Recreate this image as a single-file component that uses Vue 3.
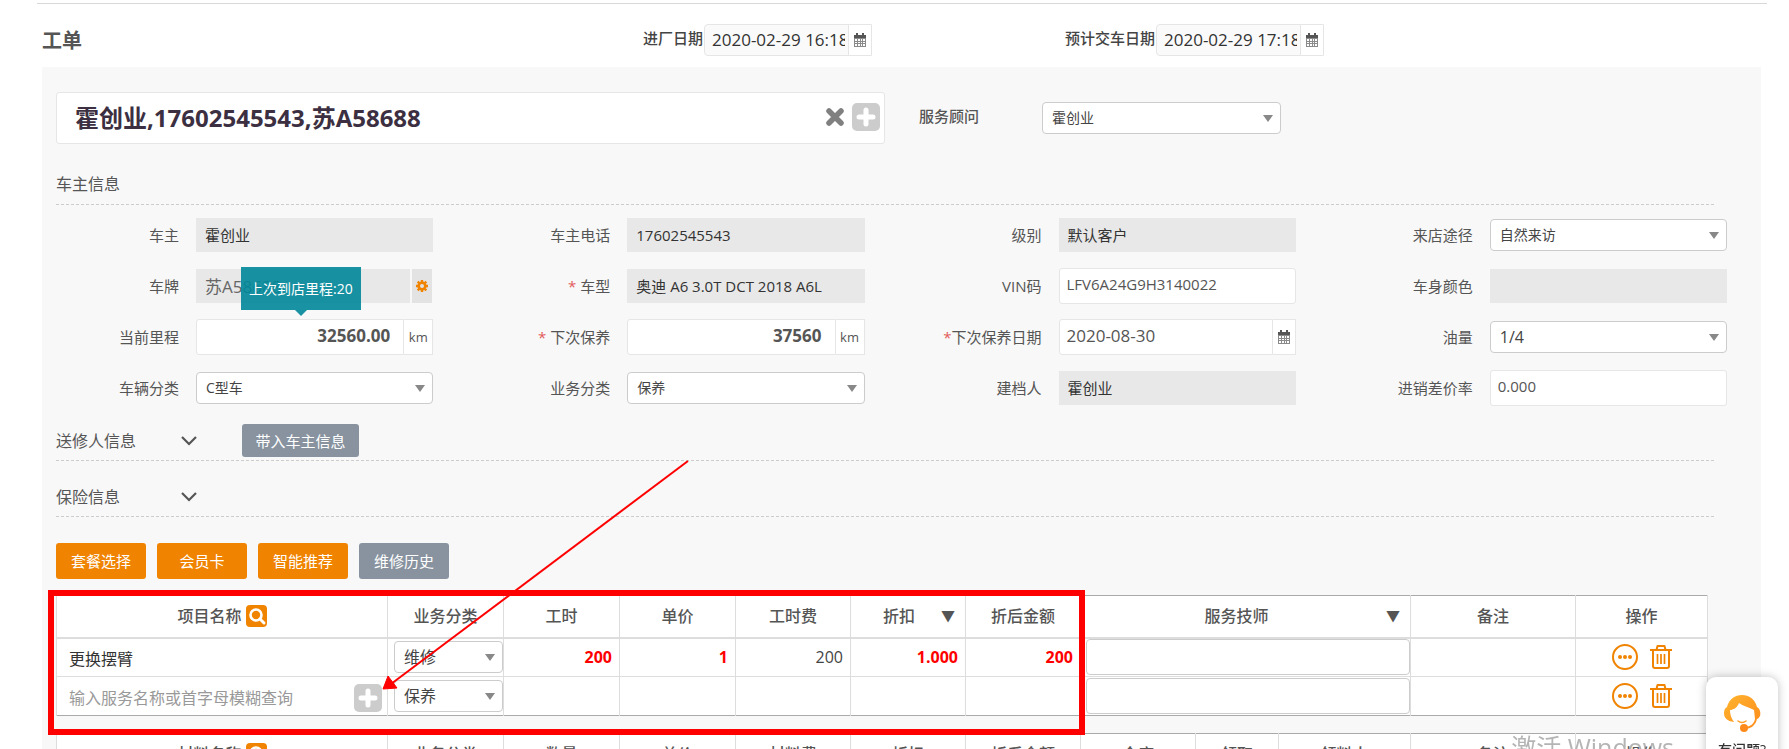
<script setup>
import { ref } from 'vue'

const keyword = ref('霍创业,17602545543,苏A58688')
const inDate = ref('2020-02-29 16:18:00')
const outDate = ref('2020-02-29 17:18:00')

const fields = ref([
  { id: 'owner', label: '车主', type: 'readonly', value: '霍创业' },
  { id: 'phone', label: '车主电话', type: 'readonly', value: '17602545543' },
  { id: 'level', label: '级别', type: 'readonly', value: '默认客户' },
  { id: 'source', label: '来店途径', type: 'select', value: '自然来访' },
  { id: 'plate', label: '车牌', type: 'plate', value: '苏A58688' },
  { id: 'model', label: '车型', star: '* ', type: 'readonly', value: '奥迪 A6 3.0T DCT 2018 A6L' },
  { id: 'vin', label: 'VIN码', type: 'text', value: 'LFV6A24G9H3140022' },
  { id: 'color', label: '车身颜色', type: 'readonly', value: '' },
  { id: 'mileage', label: '当前里程', type: 'km', value: '32560.00', tip: '上次到店里程:20' },
  { id: 'next', label: '下次保养', star: '* ', type: 'km', value: '37560' },
  { id: 'nextDate', label: '下次保养日期', star: '*', type: 'date', value: '2020-08-30' },
  { id: 'fuel', label: '油量', type: 'select', value: '1/4', large: true },
  { id: 'carType', label: '车辆分类', type: 'select', value: 'C型车' },
  { id: 'bizType', label: '业务分类', type: 'select', value: '保养' },
  { id: 'creator', label: '建档人', type: 'readonly', value: '霍创业' },
  { id: 'rate', label: '进销差价率', type: 'text', value: '0.000' }
])

const items = ref([
  { name: '更换摆臂', type: '维修', hours: '200', price: '1', fee: '200', discount: '1.000', total: '200', tech: '' },
  { name: '', type: '保养', hours: '', price: '', fee: '', discount: '', total: '', tech: '' }
])

const actions = [
  { text: '套餐选择', tone: 'orange' },
  { text: '会员卡', tone: 'orange' },
  { text: '智能推荐', tone: 'orange' },
  { text: '维修历史', tone: 'slate' }
]

const materialHeads = ['业务分类', '数量', '单价', '材料费', '折扣', '折后金额', '仓库', '领取', '领料人', '备注', '操作']
</script>

<template>
  <div class="page">
    <svg class="defs" aria-hidden="true">
      <symbol id="i-calendar" viewBox="0 0 12 14">
        <path d="M0 3h12v11H0z" fill="#8a8a8a" />
        <path d="M0 2h12v3H0z" fill="#555" />
        <path d="M2 0h2v4H2zM8 0h2v4H8z" fill="#555" />
        <path d="M1 6h2v2H1zM4 6h2v2H4zM7 6h1v2H7zM9 6h2v2H9zM1 9h2v1H1zM4 9h2v1H4zM7 9h1v1H7zM9 9h2v1H9zM1 11h2v2H1zM4 11h2v2H4zM7 11h1v2H7zM9 11h2v2H9z" fill="#fff" />
      </symbol>
      <symbol id="i-plus" viewBox="0 0 28 28">
        <rect width="28" height="28" rx="5" fill="#ccc" />
        <path d="M14 7v14M7 14h14" stroke="#fff" stroke-width="5" stroke-linecap="round" />
      </symbol>
      <symbol id="i-search" viewBox="0 0 21 22">
        <rect width="21" height="22" rx="4" fill="#f08300" />
        <circle cx="10" cy="10" r="5.5" fill="none" stroke="#fff" stroke-width="2.6" />
        <path d="M14 14l4 4" stroke="#fff" stroke-width="3" stroke-linecap="round" />
      </symbol>
      <symbol id="i-more" viewBox="0 0 26 26">
        <circle cx="13" cy="13" r="12" fill="none" stroke="#f08300" stroke-width="2" />
        <circle cx="8" cy="13" r="2" fill="#f08300" />
        <circle cx="13" cy="13" r="2" fill="#f08300" />
        <circle cx="18" cy="13" r="2" fill="#f08300" />
      </symbol>
      <symbol id="i-trash" viewBox="0 0 22 24">
        <g fill="none" stroke="#f08300" stroke-linejoin="round">
          <path d="M0 5h22M3 5v16q0 2 2 2h12q2 0 2-2V5" stroke-width="2" />
          <path d="M6.500 5L7.500 1h7l1 4" stroke-width="2" />
          <path d="M7.500 9v10M11 9v10M14.500 9v10" stroke-width="1.700" />
        </g>
      </symbol>
      <symbol id="i-chevron" viewBox="0 0 16 10">
        <path d="M1 1l7 7 7-7" fill="none" stroke="#555" stroke-width="2.200" />
      </symbol>
    </svg>

    <header class="top">
      <h1>工单</h1>
      <div class="stamp">
        <label for="in-date">进厂日期</label>
        <span class="group">
          <input id="in-date" v-model="inDate" type="text" />
          <button type="button" aria-label="选择进厂日期"><svg class="cal"><use href="#i-calendar" /></svg></button>
        </span>
      </div>
      <div class="stamp">
        <label for="out-date">预计交车日期</label>
        <span class="group">
          <input id="out-date" v-model="outDate" type="text" />
          <button type="button" aria-label="选择预计交车日期"><svg class="cal"><use href="#i-calendar" /></svg></button>
        </span>
      </div>
    </header>

    <main class="panel">
      <div class="search-row">
        <div class="search">
          <input v-model="keyword" type="text" aria-label="客户查询" />
          <button type="button" aria-label="清空">
            <svg width="18" height="18" viewBox="0 0 18 18"><path d="M3 3l12 12M15 3L3 15" stroke="#808080" stroke-width="5.500" stroke-linecap="round" /></svg>
          </button>
          <button type="button" aria-label="新增客户"><svg width="28" height="28"><use href="#i-plus" /></svg></button>
        </div>
        <div class="advisor">
          <label for="advisor">服务顾问</label>
          <span class="pick"><select id="advisor"><option>霍创业</option></select></span>
        </div>
      </div>

      <h2 class="section">车主信息</h2>

      <form class="form" @submit.prevent>
        <template v-for="f in fields" :key="f.id">
          <label :for="f.id"><i v-if="f.star">{{ f.star }}</i>{{ f.label }}</label>
          <div class="control">
            <span v-if="f.type === 'select'" class="pick" :class="{ large: f.large }">
              <select :id="f.id"><option>{{ f.value }}</option></select>
            </span>
            <input v-else-if="f.type === 'readonly'" :id="f.id" class="box muted" :value="f.value" readonly />
            <input v-else-if="f.type === 'text'" :id="f.id" v-model="f.value" class="box" />
            <template v-else-if="f.type === 'plate'">
              <input :id="f.id" class="box muted plate" :value="f.value" readonly />
              <button type="button" class="gear" aria-label="车牌设置">
                <svg width="12" height="12" viewBox="0 0 12 12">
                  <circle cx="6" cy="6" r="3.300" fill="none" stroke="#f08300" stroke-width="2.600" />
                  <path d="M6 0v2M6 10v2M0 6h2M10 6h2M1.700 1.700l1.500 1.500M8.800 8.800l1.500 1.500M10.300 1.700L8.800 3.200M3.200 8.800l-1.500 1.500" stroke="#f08300" stroke-width="2.400" />
                </svg>
              </button>
            </template>
            <template v-else-if="f.type === 'km'">
              <input :id="f.id" v-model="f.value" class="box joined number" />
              <span class="unit">km</span>
              <span v-if="f.tip" class="tip" role="tooltip">{{ f.tip }}</span>
            </template>
            <template v-else>
              <input :id="f.id" v-model="f.value" class="box joined date" />
              <button type="button" class="unit slim" aria-label="选择日期"><svg class="cal"><use href="#i-calendar" /></svg></button>
            </template>
          </div>
        </template>
      </form>

      <div class="fold">
        <span>送修人信息</span>
        <button type="button" class="toggle" aria-label="展开送修人信息"><svg width="16" height="10"><use href="#i-chevron" /></svg></button>
        <button type="button" class="btn slate wide">带入车主信息</button>
      </div>
      <div class="fold">
        <span>保险信息</span>
        <button type="button" class="toggle" aria-label="展开保险信息"><svg width="16" height="10"><use href="#i-chevron" /></svg></button>
      </div>

      <div class="actions">
        <button v-for="a in actions" :key="a.text" type="button" class="btn" :class="a.tone">{{ a.text }}</button>
      </div>

      <div class="tables">
        <table>
          <colgroup>
            <col class="c-name" /><col class="c-num" span="3" /><col class="c-sum" span="3" /><col class="c-tech" /><col class="c-note" /><col class="c-op" />
          </colgroup>
          <thead>
            <tr>
              <th><span class="head">项目名称<button type="button" aria-label="查询项目"><svg width="21" height="22"><use href="#i-search" /></svg></button></span></th>
              <th>业务分类</th><th>工时</th><th>单价</th><th>工时费</th>
              <th class="sort"><span>折扣</span><b>▼</b></th>
              <th>折后金额</th>
              <th class="sort"><span>服务技师</span><b>▼</b></th>
              <th>备注</th><th>操作</th>
            </tr>
          </thead>
          <tbody>
            <tr v-for="(r, i) in items" :key="i">
              <td class="name">
                <span v-if="r.name">{{ r.name }}</span>
                <div v-else class="add">
                  <input type="text" aria-label="服务名称" placeholder="输入服务名称或首字母模糊查询" />
                  <button type="button" aria-label="新增项目"><svg width="28" height="28"><use href="#i-plus" /></svg></button>
                </div>
              </td>
              <td class="type"><span class="pick"><select :aria-label="'业务分类' + (i + 1)"><option>{{ r.type }}</option></select></span></td>
              <td class="num red">{{ r.hours }}</td>
              <td class="num red">{{ r.price }}</td>
              <td class="num">{{ r.fee }}</td>
              <td class="num red">{{ r.discount }}</td>
              <td class="num red">{{ r.total }}</td>
              <td class="tech"><input v-model="r.tech" type="text" :aria-label="'服务技师' + (i + 1)" /></td>
              <td></td>
              <td class="ops">
                <div>
                  <button type="button" aria-label="更多"><svg width="26" height="26"><use href="#i-more" /></svg></button>
                  <button type="button" aria-label="删除"><svg width="22" height="24"><use href="#i-trash" /></svg></button>
                </div>
              </td>
            </tr>
          </tbody>
        </table>

        <table class="materials">
          <colgroup>
            <col class="c-name" /><col class="c-num" span="3" /><col class="c-sum" span="4" /><col class="c-take" /><col class="c-person" /><col class="c-note" /><col class="c-op" />
          </colgroup>
          <thead>
            <tr>
              <th><span class="head">材料名称<button type="button" aria-label="查询材料"><svg width="21" height="22"><use href="#i-search" /></svg></button></span></th>
              <th v-for="h in materialHeads" :key="h">{{ h }}</th>
            </tr>
          </thead>
        </table>

        <div class="mark"></div>
        <svg class="arrow" width="310" height="236" viewBox="0 0 310 236">
          <path d="M307 2L10 225" stroke="#f00" stroke-width="2" />
          <path d="M2 230L7 217 16 229z" fill="#f00" stroke="#f00" />
        </svg>
      </div>
    </main>

    <div class="watermark">激活 Windows</div>

    <a class="help" href="#help">
      <svg width="38" height="38" viewBox="0 0 38 38">
        <defs>
          <linearGradient id="hair" x1="0" y1="0" x2="1" y2="1">
            <stop offset="0" stop-color="#ffb52e" />
            <stop offset="1" stop-color="#ff8a1c" />
          </linearGradient>
        </defs>
        <path d="M4 13C6 5 12 1 19 1s13 4 15 12c4 2 5 10 0 12-1 5-5 10-13 10v-2c6 0 10-3 11-8l-1-9C25 13 20 12 16 9c-2 5-6 7-9 7 0 4 1 8 4 12C4 27 1 24 1 19c0-3 1-5 3-6z" fill="url(#hair)" />
        <path d="M15 27q4 3 8 0" fill="none" stroke="#ff9d25" stroke-width="1.500" stroke-linecap="round" />
        <circle cx="21" cy="34" r="4" fill="#ff8a1c" />
      </svg>
      <span>有问题?</span>
    </a>
  </div>
</template>

<style>
html,
body {
  margin: 0;
  overflow: hidden;
}
</style>

<style scoped>
* {
  box-sizing: border-box;
}
.page {
  height: 100vh;
  overflow: hidden;
  background: #fff;
  color: #555;
  font: 15px/20px "Open Sans", "Noto Sans CJK SC", sans-serif;
}
.defs {
  position: absolute;
  width: 0;
  height: 0;
}
input,
select,
button {
  margin: 0;
  font: inherit;
  color: inherit;
}
button {
  display: flex;
  align-items: center;
  justify-content: center;
  padding: 0;
  border: 0;
  background: none;
  cursor: pointer;
}
svg {
  display: block;
  flex: none;
}
.cal {
  width: 12px;
  height: 14px;
}

.top {
  display: grid;
  grid-template-columns: 601fr 422fr 724fr;
  align-items: center;
  height: 64px;
  margin-top: 3px;
  padding-left: 42px;
  position: relative;
}
.top::before {
  content: "";
  position: absolute;
  top: 0;
  left: 37px;
  right: 22px;
  border-top: 1px solid #d8d8d8;
}
h1 {
  margin: 0;
  padding-top: 11px;
  font-size: 20px;
  line-height: 28px;
}
.stamp {
  display: flex;
  align-items: center;
  gap: 1px;
  padding-top: 9px;
  color: #444;
}
.stamp label {
  padding-bottom: 4px;
  font-weight: 500;
}
.group {
  display: flex;
  height: 32px;
  border: 1px solid #e6e6e6;
  border-radius: 4px 0 0 4px;
  background: #fafafa;
}
.group input {
  width: 143px;
  padding: 0 3px 0 7px;
  border: 0;
  background: none;
  color: #333;
  font-size: 17px;
}
.group button {
  width: 23px;
  border-left: 1px solid #e6e6e6;
  background: #fff;
}

.panel {
  margin: 0 28px 0 42px;
  padding: 25px 0 40px 14px;
  background: #f8f8f8;
}
.search-row {
  display: grid;
  grid-template-columns: 829fr 876fr;
}
.search {
  display: flex;
  align-items: center;
  gap: 8px;
  height: 52px;
  padding: 0 4px 3px 18px;
  border: 1px solid #e6e6e6;
  border-radius: 3px;
  background: #fff;
}
.search input {
  flex: 1;
  min-width: 0;
  padding: 0;
  border: 0;
  outline: 0;
  color: #3b2f41;
  font-size: 24px;
  font-weight: 700;
}
.advisor {
  display: flex;
  align-items: center;
  padding-left: 34px;
}
.advisor label {
  width: 123px;
  padding-bottom: 4px;
  font-weight: 500;
}
.advisor .pick {
  width: 239px;
}

.pick {
  display: block;
  position: relative;
  width: 100%;
  height: 32px;
}
.pick::after {
  content: "";
  position: absolute;
  top: 13px;
  right: 8px;
  border: 5px solid transparent;
  border-top: 7px solid #888;
  border-bottom: 0;
  pointer-events: none;
}
.pick select {
  width: 100%;
  height: 100%;
  padding: 0 20px 0 9px;
  border: 1px solid #ccc;
  border-radius: 4px;
  background: #fff;
  color: #444;
  font-size: 14px;
  appearance: none;
}
.pick.large select {
  font-size: 16px;
}

.section {
  margin: 20px 47px 4px 0;
  border-bottom: 1px dashed #ccc;
  font-size: 16px;
  font-weight: 400;
  line-height: 40px;
}
.form {
  display: grid;
  grid-template-columns: 123px 1fr 160px 1fr 160px 1fr 160px 1fr;
  grid-auto-rows: 51px;
  align-items: center;
  column-gap: 17px;
  margin-right: 34px;
}
.form label {
  text-align: right;
  white-space: pre;
}
.form i {
  color: #e25b5b;
  font-style: normal;
}
.control {
  display: flex;
  position: relative;
  min-width: 0;
}
.box {
  flex: 1;
  width: 100%;
  min-width: 0;
  height: 36px;
  padding: 0 7px 3px;
  border: 1px solid #e6e6e6;
  border-radius: 3px;
  background: #fff;
}
.box.muted {
  height: 34px;
  padding: 0 9px;
  border: 0;
  border-radius: 0;
  background: #e8e8e8;
  color: #333;
}
.box.plate {
  color: #666;
  font-size: 17px;
}
.gear {
  width: 20px;
  height: 34px;
  margin: 0 1px 0 2px;
  background: #e3e3e3;
}
.box.joined {
  border-radius: 3px 0 0 3px;
}
.box.number {
  padding-right: 13px;
  font-size: 17px;
  font-weight: 700;
  text-align: right;
}
.date {
  font-size: 17px;
}
.unit {
  display: flex;
  align-items: center;
  justify-content: center;
  width: 29px;
  height: 36px;
  border: 1px solid #e6e6e6;
  border-left: 0;
  background: #fff;
  font-size: 13px;
}
.unit.slim {
  width: 23px;
}
.tip {
  position: absolute;
  left: 45px;
  bottom: 45px;
  padding: 12px 8px 11px;
  background: rgba(0, 135, 153, 0.9);
  color: #fff;
  font-size: 14px;
  white-space: nowrap;
}
.tip::after {
  content: "";
  position: absolute;
  top: 100%;
  left: 50%;
  margin-left: -6px;
  border: 6px solid transparent;
  border-top-color: rgba(0, 135, 153, 0.9);
  border-bottom: 0;
}

.fold {
  display: flex;
  align-items: center;
  height: 38px;
  margin: 10px 47px 18px 0;
  padding-bottom: 2px;
  border-bottom: 1px dashed #ccc;
  font-size: 16px;
}
.fold span {
  width: 125px;
}
.toggle {
  width: 16px;
}
.btn {
  width: 90px;
  height: 36px;
  border-radius: 3px;
  color: #fff;
  font-size: 15px;
}
.orange {
  background: #f08300;
}
.slate {
  background: #88939f;
}
.btn.wide {
  width: 117px;
  height: 33px;
  margin-left: 45px;
}
.fold + .fold {
  margin-bottom: 26px;
}
.actions {
  display: flex;
  gap: 11px;
  margin-bottom: 16px;
}

.tables {
  position: relative;
  margin-right: 54px;
}
table {
  width: 100%;
  table-layout: fixed;
  border-collapse: collapse;
  border-top: 1px solid #aaa;
  border-bottom: 1px solid #aaa;
  background: #fff;
  color: #444;
  font-size: 16px;
}
.materials {
  margin-top: 17px;
}
.c-name { width: 331px; }
.c-num { width: 116px; }
.c-sum { width: 115px; }
.c-tech { width: 330px; }
.c-take { width: 83px; }
.c-person { width: 132px; }
.c-note { width: 165px; }
.c-op { width: 132px; }
th,
td {
  padding: 0;
  border-right: 1px solid #ddd;
  border-left: 1px solid #ddd;
}
th {
  height: 42px;
  border-bottom: 2px solid #ddd;
  color: #555;
  font-weight: 500;
}
td {
  height: 39px;
}
tbody tr + tr td {
  border-top: 1px solid #ddd;
}
.head {
  display: flex;
  align-items: center;
  justify-content: center;
  gap: 4px;
}
.sort {
  position: relative;
  padding-right: 18px;
}
.sort b {
  position: absolute;
  right: 10px;
  font-size: 14px;
  font-weight: 400;
}
.name {
  padding: 3px 5px 0 12px;
  color: #333;
}
.add {
  display: flex;
}
.add input {
  flex: 1;
  min-width: 0;
  padding: 0;
  border: 0;
  background: none;
}
.add input::placeholder {
  color: #999;
  opacity: 1;
}
.type {
  padding-left: 6px;
}
.type .pick select {
  font-size: 16px;
}
.num {
  padding-right: 7px;
  text-align: right;
}
.red {
  color: #f00;
  font-weight: 700;
}
.tech {
  padding-left: 5px;
}
.tech input {
  display: block;
  width: 100%;
  height: 36px;
  border: 1px solid #ccc;
  border-radius: 4px;
  background: #fff;
}
.ops div {
  display: flex;
  align-items: center;
  justify-content: center;
  gap: 12px;
}

.mark {
  position: absolute;
  top: -5px;
  left: -8px;
  width: calc(62% + 13px);
  height: 145px;
  border: 6px solid #f00;
}
.arrow {
  position: absolute;
  top: -136px;
  left: 325px;
  pointer-events: none;
}
.watermark {
  position: fixed;
  right: 115px;
  bottom: -16px;
  color: rgba(130, 130, 130, 0.6);
  font-size: 25px;
  line-height: 36px;
}
.help {
  position: fixed;
  right: 11px;
  bottom: -28px;
  display: flex;
  flex-direction: column;
  align-items: center;
  gap: 8px;
  width: 72px;
  height: 100px;
  padding-top: 17px;
  border-radius: 10px;
  background: #fff;
  box-shadow: 0 0 10px rgba(0, 0, 0, 0.25);
  color: #333;
  font-size: 14px;
  font-weight: 500;
  text-decoration: none;
}
</style>
